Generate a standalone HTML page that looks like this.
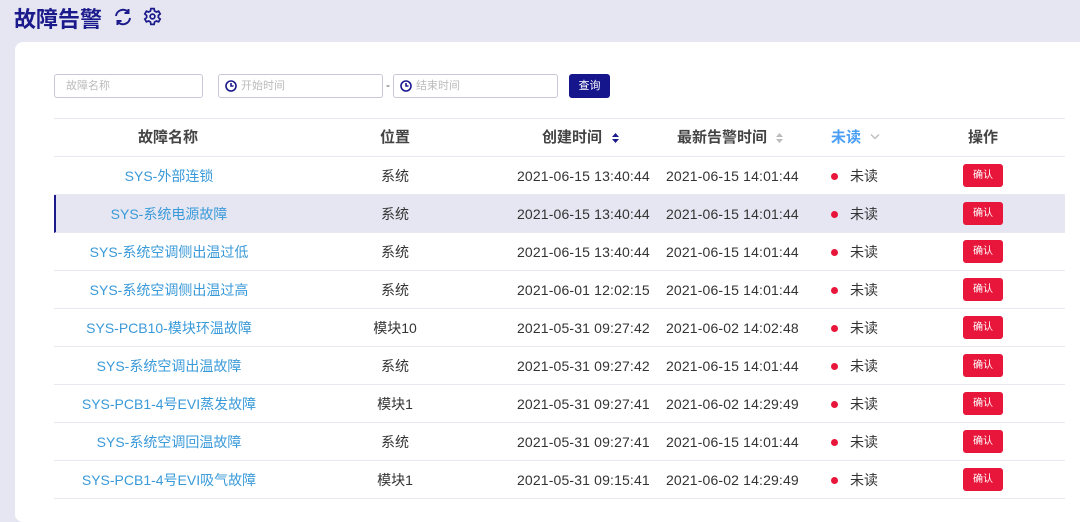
<!DOCTYPE html>
<html><head><meta charset="utf-8"><style>
*{margin:0;padding:0;box-sizing:border-box}
body{width:1080px;height:504px;overflow:hidden;background:#e6e6f2;font-family:"Liberation Sans","Noto Sans CJK SC",sans-serif;position:relative}
.t{position:absolute;left:14px;top:2px;font-size:22px;font-weight:bold;color:#1a1a8c}
.card{position:absolute;left:15px;top:42px;width:1080px;height:480px;background:#fff;border-radius:8px}
.inp{position:absolute;top:74px;height:24px;border:1px solid #c8c8d8;border-radius:3px;font-size:11px;color:#bbb;line-height:22px}
.btn{position:absolute;left:569px;top:74px;width:41px;height:24px;background:#16168c;border-radius:3px;color:#fff;font-size:11px;text-align:center;line-height:24px}
.row{position:absolute;left:54px;width:1011px;height:38px;border-bottom:1px solid #e8e8f0;font-size:14px;color:#333}
.row span{position:absolute;top:0;line-height:38px;white-space:nowrap}
.d{letter-spacing:0.15px}
.hd span{font-weight:bold;color:#444;font-size:15px}
.nm{color:#3a9ad9!important;width:230px;text-align:center;left:0}
.loc{left:341px;width:0;display:flex;justify-content:center}
.dot{width:7px;height:7px;border-radius:50%;background:#e8163a;top:16px!important;left:777px}
.ok{left:909px;top:7px!important;width:40px;height:23px;background:#e8163a;border-radius:3px;color:#fff;font-size:10px;line-height:23px!important;text-align:center}
.sel{background:#e6e6f2}
</style></head><body>
<div class="t">故障告警</div>
<svg style="position:absolute;left:113px;top:7px" width="20" height="20" viewBox="0 0 20 20" fill="none" stroke="#1a1a8c" stroke-width="2"><path d="M3 9a7 7 0 0 1 12.5-3.5M17 11a7 7 0 0 1-12.5 3.5"/><path d="M15.5 2v4h-4M4.5 18v-4h4"/></svg>
<svg style="position:absolute;left:143px;top:7px" width="19" height="19" viewBox="0 0 24 24" fill="none" stroke="#1a1a8c" stroke-width="2.2"><circle cx="12" cy="12" r="3"/><path d="M10 2h4l.6 3 2.2 1.3 2.9-1 2 3.4-2.3 2v2.6l2.3 2-2 3.4-2.9-1-2.2 1.3-.6 3h-4l-.6-3-2.2-1.3-2.9 1-2-3.4 2.3-2v-2.6l-2.3-2 2-3.4 2.9 1 2.2-1.3z"/></svg>
<div class="card"></div>
<div class="inp" style="left:54px;width:149px;padding-left:11px">故障名称</div>
<div class="inp" style="left:218px;width:165px;padding-left:22px"><svg style="position:absolute;left:6px;top:5px" width="12" height="12" viewBox="0 0 12 12" fill="none" stroke="#1a1a8c" stroke-width="1.6"><circle cx="6" cy="6" r="5"/><path d="M6 3v3h2.5"/></svg>开始时间</div>
<div style="position:absolute;left:386px;top:78px;font-size:12px;color:#555">-</div>
<div class="inp" style="left:393px;width:165px;padding-left:22px"><svg style="position:absolute;left:6px;top:5px" width="12" height="12" viewBox="0 0 12 12" fill="none" stroke="#1a1a8c" stroke-width="1.6"><circle cx="6" cy="6" r="5"/><path d="M6 3v3h2.5"/></svg>结束时间</div>
<div class="btn">查询</div>
<div style="position:absolute;left:54px;top:118px;width:1011px;height:1px;background:#e8e8f0"></div>
<div class="row hd" style="top:119px"><span style="left:84px">故障名称</span><span style="left:326px">位置</span><span style="left:488px">创建时间</span><span style="left:623px">最新告警时间</span><span style="left:777px;color:#4a9ff5">未读</span><span style="left:914px">操作</span></div>
<svg style="position:absolute;left:612px;top:133px" width="7" height="10"><path d="M0 4L3.5 0 7 4z" fill="#1a1a8c"/><path d="M0 6L3.5 10 7 6z" fill="#1a1a8c"/></svg>
<svg style="position:absolute;left:776px;top:133px" width="7" height="10"><path d="M0 4L3.5 0 7 4z" fill="#bbb"/><path d="M0 6L3.5 10 7 6z" fill="#bbb"/></svg>
<svg style="position:absolute;left:870px;top:133px" width="10" height="7" fill="none" stroke="#bbb" stroke-width="1.3"><path d="M1 1.5l4 4 4-4"/></svg>

<div class="row" style="top:157px"><span class="nm">SYS-外部连锁</span><span class="loc"><span style="position:static">系统</span></span><span class="d" style="left:463px">2021-06-15 13:40:44</span><span class="d" style="left:612px">2021-06-15 14:01:44</span><span class="dot"></span><span style="left:796px">未读</span><span class="ok">确认</span></div>
<div class="row sel" style="top:195px;border-left:2px solid #1a1a8c"><span class="nm" style="left:-2px">SYS-系统电源故障</span><span class="loc" style="left:339px"><span style="position:static">系统</span></span><span class="d" style="left:461px">2021-06-15 13:40:44</span><span class="d" style="left:610px">2021-06-15 14:01:44</span><span class="dot" style="left:775px"></span><span style="left:794px">未读</span><span class="ok" style="left:907px">确认</span></div>
<div class="row" style="top:233px"><span class="nm">SYS-系统空调侧出温过低</span><span class="loc"><span style="position:static">系统</span></span><span class="d" style="left:463px">2021-06-15 13:40:44</span><span class="d" style="left:612px">2021-06-15 14:01:44</span><span class="dot"></span><span style="left:796px">未读</span><span class="ok">确认</span></div>
<div class="row" style="top:271px"><span class="nm">SYS-系统空调侧出温过高</span><span class="loc"><span style="position:static">系统</span></span><span class="d" style="left:463px">2021-06-01 12:02:15</span><span class="d" style="left:612px">2021-06-15 14:01:44</span><span class="dot"></span><span style="left:796px">未读</span><span class="ok">确认</span></div>
<div class="row" style="top:309px"><span class="nm">SYS-PCB10-模块环温故障</span><span class="loc"><span style="position:static">模块10</span></span><span class="d" style="left:463px">2021-05-31 09:27:42</span><span class="d" style="left:612px">2021-06-02 14:02:48</span><span class="dot"></span><span style="left:796px">未读</span><span class="ok">确认</span></div>
<div class="row" style="top:347px"><span class="nm">SYS-系统空调出温故障</span><span class="loc"><span style="position:static">系统</span></span><span class="d" style="left:463px">2021-05-31 09:27:42</span><span class="d" style="left:612px">2021-06-15 14:01:44</span><span class="dot"></span><span style="left:796px">未读</span><span class="ok">确认</span></div>
<div class="row" style="top:385px"><span class="nm">SYS-PCB1-4号EVI蒸发故障</span><span class="loc"><span style="position:static">模块1</span></span><span class="d" style="left:463px">2021-05-31 09:27:41</span><span class="d" style="left:612px">2021-06-02 14:29:49</span><span class="dot"></span><span style="left:796px">未读</span><span class="ok">确认</span></div>
<div class="row" style="top:423px"><span class="nm">SYS-系统空调回温故障</span><span class="loc"><span style="position:static">系统</span></span><span class="d" style="left:463px">2021-05-31 09:27:41</span><span class="d" style="left:612px">2021-06-15 14:01:44</span><span class="dot"></span><span style="left:796px">未读</span><span class="ok">确认</span></div>
<div class="row" style="top:461px"><span class="nm">SYS-PCB1-4号EVI吸气故障</span><span class="loc"><span style="position:static">模块1</span></span><span class="d" style="left:463px">2021-05-31 09:15:41</span><span class="d" style="left:612px">2021-06-02 14:29:49</span><span class="dot"></span><span style="left:796px">未读</span><span class="ok">确认</span></div>
</body></html>
